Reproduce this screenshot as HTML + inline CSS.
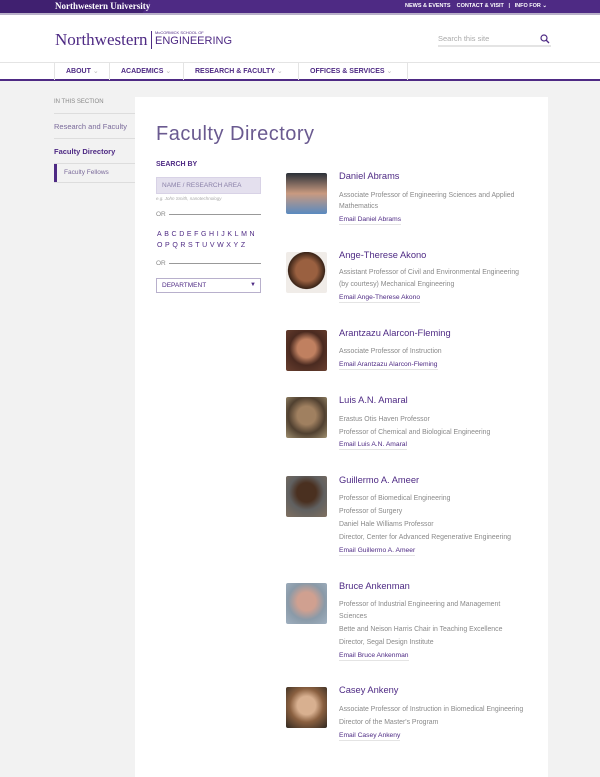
<!DOCTYPE html>
<html><head><meta charset="utf-8"><style>
*{margin:0;padding:0;box-sizing:border-box}
body{width:600px;height:766px;overflow:hidden;background:#f2f2f2;font-family:"Liberation Sans",sans-serif;position:relative}
.a{position:absolute;white-space:nowrap}
.top{left:0;top:0;width:600px;height:13px;background:#4e2a84}
.hdr{left:0;top:13px;width:600px;height:49px;background:#fff}
.nav{left:0;top:62px;width:600px;height:19px;background:#fff;border-top:1px solid #e4e4e4;border-bottom:2px solid #4e2a84}
.ni{top:0;height:17px;line-height:17px;font-size:7px;font-weight:bold;color:#4e2a84;border-right:1px solid #e4e4e4;padding-left:11px}
.ni span{color:#bbb;font-weight:normal}
.panel{left:135px;top:97px;width:413px;height:680px;background:#fff}
.ph{width:41px;height:41px;border-radius:2px;left:286px}
.nm{left:339px;font-size:9.3px;color:#4e2a84;line-height:10px}
.d{left:339px;font-size:6.9px;color:#8a8a8a;line-height:10px}
.e{left:339px;font-size:6.7px;color:#4e2a84;line-height:9px;border-bottom:1px solid #e4e4e4}
.al{font-size:7px;color:#4e2a84;letter-spacing:2.6px}
</style></head><body>
<div class="a top"></div>
<div class="a" style="left:0;top:0;width:150px;height:13px;background:#402070;clip-path:polygon(0 0,100% 0,95% 100%,0 100%)"></div>
<div class="a" style="left:55px;top:1px;font-family:'Liberation Serif',serif;font-size:9px;font-weight:bold;color:#fff">Northwestern University</div>
<div class="a" style="left:405px;top:3px;font-size:5.5px;font-weight:bold;color:#fff">NEWS &amp; EVENTS &nbsp;&nbsp; CONTACT &amp; VISIT &nbsp;&nbsp;| &nbsp;&nbsp;INFO FOR ⌄</div>
<div class="a" style="left:0;top:13px;width:600px;height:2px;background:#b8b0c8"></div>
<div class="a hdr" style="top:15px;height:47px"></div>
<div class="a" style="left:55px;top:30px;font-family:'Liberation Serif',serif;font-size:17px;color:#4e2a84">Northwestern</div>
<div class="a" style="left:151px;top:31px;width:1px;height:18px;background:#4e2a84"></div>
<div class="a" style="left:155px;top:30px;font-size:4px;color:#4e2a84">McCORMICK SCHOOL OF</div>
<div class="a" style="left:155px;top:35px;font-size:11px;color:#4e2a84">ENGINEERING</div>
<div class="a" style="left:438px;top:34px;font-size:7.5px;color:#aaa">Search this site</div>
<div class="a" style="left:438px;top:45px;width:113px;height:2px;background:#e4e4e4"></div>
<svg class="a" style="left:540px;top:34px" width="10" height="10"><circle cx="4" cy="4" r="3" fill="none" stroke="#4e2a84" stroke-width="1.2"/><path d="M6 6L9 9" stroke="#4e2a84" stroke-width="1.3"/></svg>
<div class="a nav"></div>
<div class="a" style="left:54px;top:63px;width:1px;height:17px;background:#e4e4e4"></div>
<div class="a ni" style="left:55px;top:63px;width:55px">ABOUT <span>⌄</span></div>
<div class="a ni" style="left:110px;top:63px;width:74px">ACADEMICS <span>⌄</span></div>
<div class="a ni" style="left:184px;top:63px;width:115px">RESEARCH &amp; FACULTY <span>⌄</span></div>
<div class="a ni" style="left:299px;top:63px;width:109px">OFFICES &amp; SERVICES <span>⌄</span></div>
<div class="a" style="left:54px;top:99px;font-size:6px;color:#888">IN THIS SECTION</div>
<div class="a" style="left:54px;top:113px;width:81px;height:1px;background:#ddd"></div>
<div class="a" style="left:54px;top:122px;font-size:7.5px;color:#7a6a9a">Research and Faculty</div>
<div class="a" style="left:54px;top:138px;width:81px;height:1px;background:#ddd"></div>
<div class="a" style="left:54px;top:147px;font-size:7.5px;font-weight:bold;color:#4e2a84">Faculty Directory</div>
<div class="a" style="left:54px;top:163px;width:81px;height:1px;background:#ddd"></div>
<div class="a" style="left:54px;top:164px;width:3px;height:18px;background:#4e2a84"></div>
<div class="a" style="left:64px;top:169px;font-size:6.5px;color:#7a6a9a">Faculty Fellows</div>
<div class="a" style="left:54px;top:182px;width:81px;height:1px;background:#ddd"></div>
<div class="a panel"></div>
<div class="a" style="left:156px;top:123px;font-size:20px;color:#6a5a90;letter-spacing:.5px">Faculty Directory</div>
<div class="a" style="left:156px;top:161px;font-size:7px;font-weight:bold;color:#4e2a84">SEARCH BY</div>
<div class="a" style="left:156px;top:177px;width:105px;height:17px;background:#e4e0ee;border:1px solid #d8d2e6;font-size:6.5px;color:#8a80a8;line-height:15px;padding-left:5px">NAME / RESEARCH AREA</div>
<div class="a" style="left:156px;top:196px;font-size:4.5px;font-style:italic;color:#aaa">e.g. John Smith, nanotechnology</div>
<div class="a" style="left:156px;top:211px;font-size:6.5px;color:#888">OR</div>
<div class="a" style="left:169px;top:214px;width:92px;height:1px;background:#999"></div>
<div class="a al" style="left:157px;top:231px">ABCDEFGHIJKLMN</div>
<div class="a al" style="left:157px;top:242px">OPQRSTUVWXYZ</div>
<div class="a" style="left:156px;top:260px;font-size:6.5px;color:#888">OR</div>
<div class="a" style="left:169px;top:263px;width:92px;height:1px;background:#999"></div>
<div class="a" style="left:156px;top:278px;width:105px;height:15px;border:1px solid #b8b0cc;background:#fff;font-size:6.5px;color:#4e2a84;line-height:13px;padding-left:5px">DEPARTMENT<span style="position:absolute;right:4px;top:0;font-size:6px">▼</span></div>

<div class="a ph" style="top:173px;background:linear-gradient(#2a3038,#c99a80 50%,#5a8ac0)"></div>
<div class="a nm" style="top:171px">Daniel Abrams</div>
<div class="a d" style="top:191px">Associate Professor of Engineering Sciences and Applied</div>
<div class="a d" style="top:202px">Mathematics</div>
<div class="a e" style="top:215px">Email Daniel Abrams</div>

<div class="a ph" style="top:252px;background:radial-gradient(circle at 50% 45%,#9a6040 35%,#3a2418 60%,#f0ece8 62%)"></div>
<div class="a nm" style="top:250px">Ange-Therese Akono</div>
<div class="a d" style="top:268px">Assistant Professor of Civil and Environmental Engineering</div>
<div class="a d" style="top:280px">(by courtesy) Mechanical Engineering</div>
<div class="a e" style="top:293px">Email Ange-Therese Akono</div>

<div class="a ph" style="top:330px;background:radial-gradient(circle at 50% 45%,#c08060 30%,#4a2a20 55%,#6a4030)"></div>
<div class="a nm" style="top:328px">Arantzazu Alarcon-Fleming</div>
<div class="a d" style="top:347px">Associate Professor of Instruction</div>
<div class="a e" style="top:360px">Email Arantzazu Alarcon-Fleming</div>

<div class="a ph" style="top:397px;background:radial-gradient(circle at 50% 45%,#a08060 30%,#504030 60%,#a09070)"></div>
<div class="a nm" style="top:395px">Luis A.N. Amaral</div>
<div class="a d" style="top:415px">Erastus Otis Haven Professor</div>
<div class="a d" style="top:428px">Professor of Chemical and Biological Engineering</div>
<div class="a e" style="top:440px">Email Luis A.N. Amaral</div>

<div class="a ph" style="top:476px;background:radial-gradient(circle at 50% 40%,#4a3020 30%,#606060 55%,#807060)"></div>
<div class="a nm" style="top:475px">Guillermo A. Ameer</div>
<div class="a d" style="top:494px">Professor of Biomedical Engineering</div>
<div class="a d" style="top:507px">Professor of Surgery</div>
<div class="a d" style="top:520px">Daniel Hale Williams Professor</div>
<div class="a d" style="top:533px">Director, Center for Advanced Regenerative Engineering</div>
<div class="a e" style="top:546px">Email Guillermo A. Ameer</div>

<div class="a ph" style="top:583px;background:radial-gradient(circle at 50% 45%,#d0a090 30%,#8a9aa8 60%,#a0b0c0)"></div>
<div class="a nm" style="top:581px">Bruce Ankenman</div>
<div class="a d" style="top:600px">Professor of Industrial Engineering and Management</div>
<div class="a d" style="top:612px">Sciences</div>
<div class="a d" style="top:625px">Bette and Neison Harris Chair in Teaching Excellence</div>
<div class="a d" style="top:638px">Director, Segal Design Institute</div>
<div class="a e" style="top:651px">Email Bruce Ankenman</div>

<div class="a ph" style="top:687px;background:radial-gradient(circle at 50% 45%,#d8b090 30%,#8a6040 55%,#302820)"></div>
<div class="a nm" style="top:685px">Casey Ankeny</div>
<div class="a d" style="top:705px">Associate Professor of Instruction in Biomedical Engineering</div>
<div class="a d" style="top:718px">Director of the Master's Program</div>
<div class="a e" style="top:731px">Email Casey Ankeny</div>
</body></html>
